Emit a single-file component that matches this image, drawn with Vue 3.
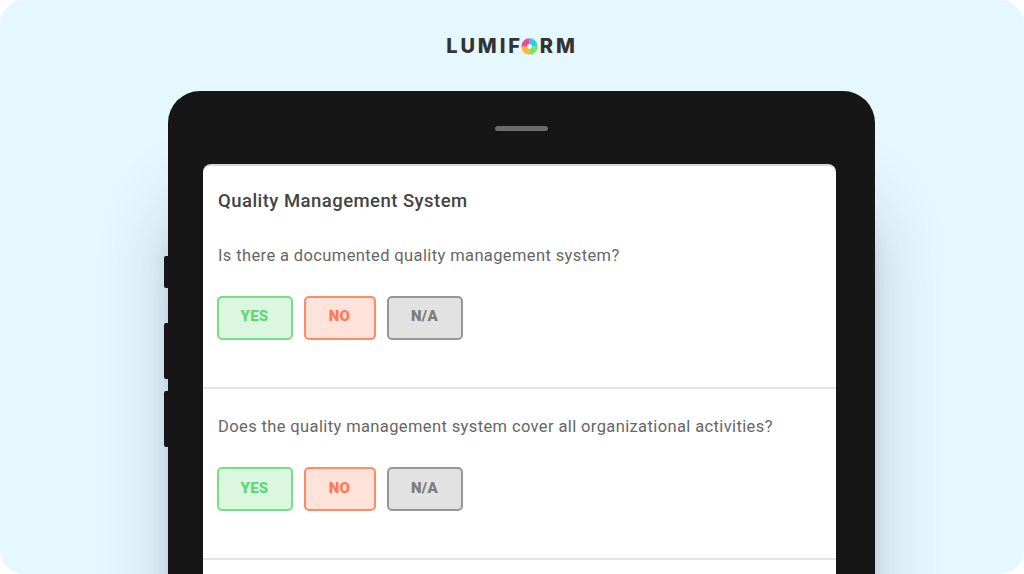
<script setup>
const questions = [
  'Is there a documented quality management system?',
  'Does the quality management system cover all organizational activities?'
]
</script>

<template>
  <div class="page">
    <div class="logo">
      <span>LUMIF</span>
      <svg class="ring" width="17" height="17" viewBox="0 0 16 16">
        <path d="M8 3A5 5 0 0 1 13 8" stroke="#38c6ee" />
        <path d="M13 8A5 5 0 0 1 8 13" stroke="#7fe06a" />
        <path d="M8 13A5 5 0 0 1 3 8" stroke="#ffb830" />
        <path d="M3 8A5 5 0 0 1 8 3" stroke="#f2469a" />
      </svg>
      <span>RM</span>
    </div>
    <div class="tablet">
      <i class="side side1"></i>
      <i class="side side2"></i>
      <i class="side side3"></i>
      <div class="speaker"></div>
      <div class="screen">
        <h1 class="title">Quality Management System</h1>
        <section v-for="(q, i) in questions" :key="i" class="question" :class="{ first: i === 0 }">
          <p class="text">{{ q }}</p>
          <div class="buttons">
            <button class="btn yes">YES</button>
            <button class="btn no">NO</button>
            <button class="btn na">N/A</button>
          </div>
        </section>
      </div>
    </div>
  </div>
</template>

<style>
html, body { margin: 0; background: #fff; overflow: hidden; }
</style>

<style scoped>
.page {
  width: 1024px;
  height: 574px;
  box-sizing: border-box;
  background: #e5f7ff;
  border-radius: 24px;
  overflow: hidden;
  display: flex;
  flex-direction: column;
  align-items: center;
  padding-top: 36px;
  font-family: Roboto, "Liberation Sans", sans-serif;
}
.logo {
  height: 20px;
  display: flex;
  align-items: center;
  font-family: Inter, Roboto, sans-serif;
  font-size: 20px;
  font-weight: 800;
  letter-spacing: 2.9px;
  color: #333;
  line-height: 20px;
}
.ring { fill: none; stroke-width: 5.5px; margin: 0 2px 0 -2px; }
.tablet {
  position: relative;
  margin-top: 35px;
  margin-left: 18px;
  width: 707px;
  height: 560px;
  flex: none;
  box-sizing: border-box;
  background: #161616;
  border-radius: 32px 32px 0 0;
  padding: 35px 39px 0 35px;
  box-shadow: 0 110px 80px -10px rgba(50, 70, 90, 0.3), 0 130px 20px -8px rgba(50, 60, 70, 0.25);
}
.side { position: absolute; left: -4px; width: 4px; background: #161616; border-radius: 2px 0 0 2px; }
.side1 { top: 165px; height: 32px; }
.side2 { top: 232px; height: 56px; }
.side3 { top: 300px; height: 56px; }
.speaker { width: 53px; height: 5px; margin: 0 auto; background: #6b6b6b; border-radius: 3px; transform: translateX(2px); }
.screen {
  margin-top: 33px;
  height: 500px;
  background: #fff;
  border-radius: 8px 8px 0 0;
  border-top: 2px solid #d8d8d8;
  box-sizing: border-box;
}
.title {
  margin: 0;
  padding: 24px 15px 0 15.5px;
  font-size: 18.5px;
  line-height: 22px;
  font-weight: 500;
  letter-spacing: 0.46px;
  color: #444;
}
.question {
  height: 171px;
  box-sizing: border-box;
  padding: 28px 15px 0 15.5px;
  border-bottom: 2px solid #e6e6e6;
}
.question.first { height: 177px; padding-top: 34px; }
.text {
  margin: 0;
  font-size: 16.5px;
  line-height: 20px;
  letter-spacing: 0.38px;
  color: #666;
}
.buttons { display: flex; gap: 11px; margin: 30px 0 0 -1.5px; }
.btn {
  height: 44px;
  box-sizing: border-box;
  border-radius: 5px;
  border: 2px solid;
  font-family: Roboto, sans-serif;
  font-size: 15px;
  font-weight: 900;
  letter-spacing: 0.3px;
  padding: 0 0 3px;
}
.first .btn { padding-bottom: 5px; }
.yes { width: 76px; background: #dcf7e0; border-color: #72e085; color: #5fd878; }
.no { width: 72px; background: #ffe2da; border-color: #ff8a66; color: #ff7a50; }
.na { width: 76px; background: #e2e2e2; border-color: #969696; color: #7c7c7c; }
</style>
